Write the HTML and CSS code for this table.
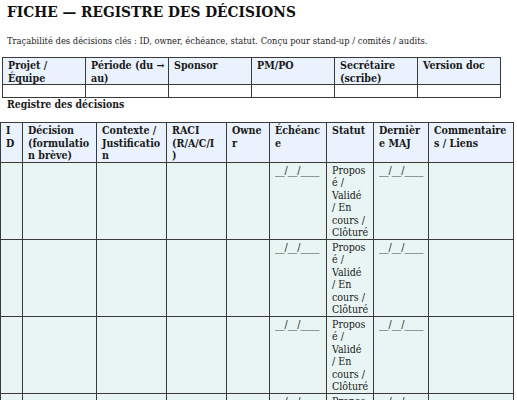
FILE: index.html
```html
<!DOCTYPE html>
<html lang="fr">
<head>
<meta charset="utf-8">
<title>Fiche — Registre des décisions</title>
<link rel="stylesheet" href="styles.css">
</head>
<body>
<h1 class="title">FICHE — REGISTRE DES DÉCISIONS</h1>
<p class="subtitle">Traçabilité des décisions clés : ID, owner, échéance, statut. Conçu pour stand-up / comités / audits.</p>

<table class="meta">
  <colgroup>
    <col><col><col><col><col><col>
  </colgroup>
  <tr class="head">
    <th>Projet /<br>Équipe</th>
    <th>Période (du →<br>au)</th>
    <th>Sponsor</th>
    <th>PM/PO</th>
    <th>Secrétaire<br>(scribe)</th>
    <th>Version doc</th>
  </tr>
  <tr class="blank">
    <td></td><td></td><td></td><td></td><td></td><td></td>
  </tr>
</table>

<h2 class="section">Registre des décisions</h2>

<table class="register">
  <colgroup>
    <col class="c-id"><col class="c-dec"><col class="c-ctx"><col class="c-raci"><col class="c-own"><col class="c-due"><col class="c-stat"><col class="c-maj"><col class="c-com">
  </colgroup>
  <tr class="head">
    <th>I<br>D</th>
    <th>Décision<br>(formulatio<br>n brève)</th>
    <th>Contexte /<br>Justificatio<br>n</th>
    <th>RACI<br>(R/A/C/I<br>)</th>
    <th>Owne<br>r</th>
    <th>Échéanc<br>e</th>
    <th>Statut</th>
    <th>Dernièr<br>e MAJ</th>
    <th>Commentaire<br>s / Liens</th>
  </tr>
  <tr>
    <td></td><td></td><td></td><td></td><td></td>
    <td>__/__/____</td>
    <td>Propos<br>é /<br>Validé<br>/ En<br>cours /<br>Clôturé</td>
    <td>__/__/____</td>
    <td></td>
  </tr>
  <tr>
    <td></td><td></td><td></td><td></td><td></td>
    <td>__/__/____</td>
    <td>Propos<br>é /<br>Validé<br>/ En<br>cours /<br>Clôturé</td>
    <td>__/__/____</td>
    <td></td>
  </tr>
  <tr>
    <td></td><td></td><td></td><td></td><td></td>
    <td>__/__/____</td>
    <td>Propos<br>é /<br>Validé<br>/ En<br>cours /<br>Clôturé</td>
    <td>__/__/____</td>
    <td></td>
  </tr>
  <tr>
    <td></td><td></td><td></td><td></td><td></td>
    <td>__/__/____</td>
    <td>Propos<br>é /<br>Validé<br>/ En<br>cours /<br>Clôturé</td>
    <td>__/__/____</td>
    <td></td>
  </tr>
</table>
</body>
</html>
```

FILE: styles.css
```css
html, body {
  margin: 0;
  padding: 0;
  background: #ffffff;
}

body {
  padding: 0 0 0 7px;
  font-family: "DejaVu Serif Condensed", "DejaVu Serif", "Liberation Serif", serif;
  font-stretch: condensed;
  color: #1a1a1a;
  overflow: hidden;
  height: 400px;
}

.title {
  margin: 0;
  padding-top: 3px;
  font-size: 15.3px;
  line-height: 19px;
  font-weight: bold;
  color: #111111;
}

.subtitle {
  margin: 13px 0 0 0;
  font-size: 9.3px;
  line-height: 12px;
  color: #222222;
}

table {
  border-collapse: collapse;
  table-layout: fixed;
}

th, td {
  border: 1px solid #3a3a3a;
  padding: 1px 5px 0 5px;
  text-align: left;
  vertical-align: top;
  font-size: 10.6px;
  line-height: 12.5px;
  white-space: nowrap;
  overflow: hidden;
}

th {
  font-weight: bold;
  background: #eaf2fd;
  color: #1a1a1a;
}

.meta {
  margin: 10px 0 0 -5px;
  width: 499px;
}

.meta .blank td {
  height: 11px;
  background: #ffffff;
}

.section {
  margin: 0;
  font-size: 10.4px;
  line-height: 13px;
  font-weight: bold;
  color: #1a1a1a;
}

.register {
  margin: 11px 0 0 -7px;
  width: 513px;
}

.register td {
  background: #e8f5f2;
  height: 75px;
}

.c-id { width: 22px; }
.c-dec { width: 74px; }
.c-ctx { width: 70px; }
.c-raci { width: 60px; }
.c-own { width: 43px; }
.c-due { width: 57px; }
.c-stat { width: 47px; }
.c-maj { width: 55px; }
.c-com { width: 85px; }
```
